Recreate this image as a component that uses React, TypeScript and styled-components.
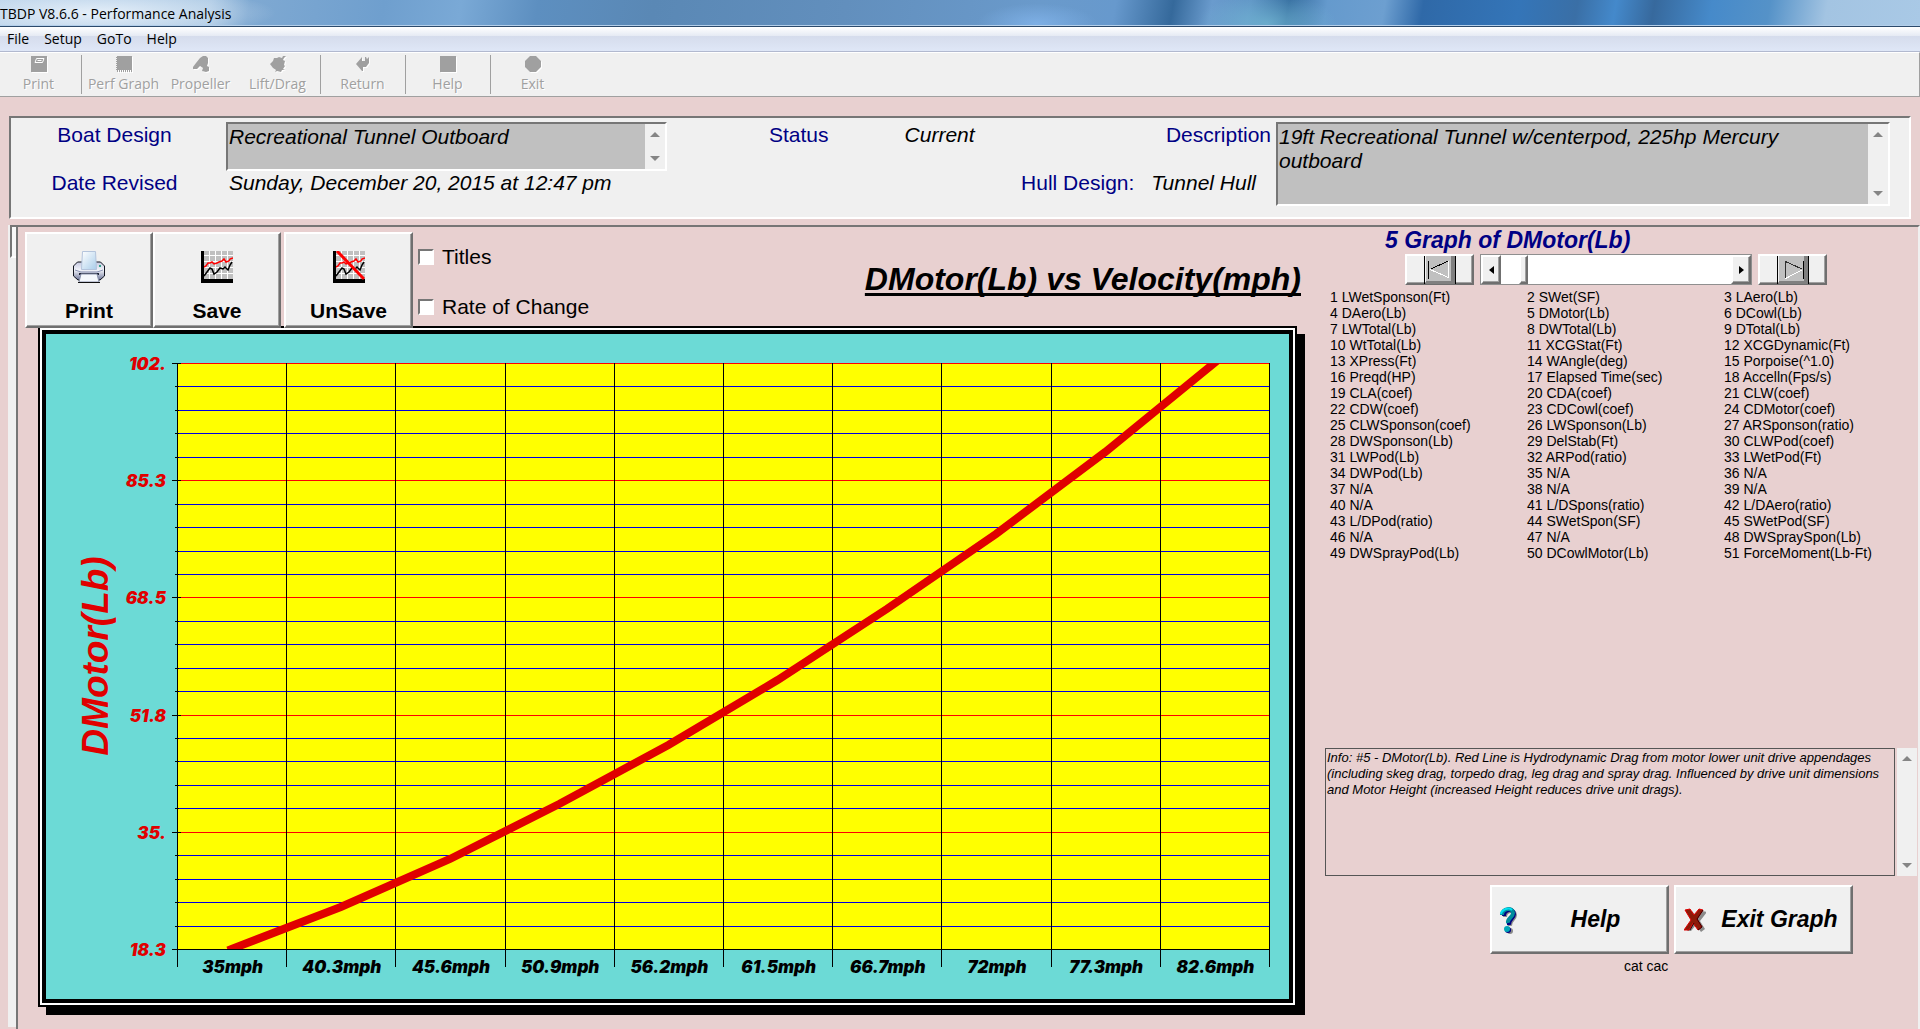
import React, { useState } from "react";
import styled, { createGlobalStyle, css } from "styled-components";

const PINK = "#e8d0d0";
const FACE = "#f0f0f0";
const NAVY = "#000084";
const UI = `"Open Sans", "Noto Sans", sans-serif`;
const ARIAL = `"Liberation Sans", Arial, sans-serif`;

const GlobalStyle = createGlobalStyle`
  *, *::before, *::after { box-sizing: border-box; }
  body { margin: 0; background: ${PINK}; font-family: ${ARIAL}; color: #000; }
  button, input, textarea { font: inherit; color: inherit; margin: 0; }
`;

const raised = css`
  border: 2px solid;
  border-color: #fff #6f6f6f #6f6f6f #fff;
  box-shadow: inset -1px -1px 0 #a0a0a0;
  background: ${FACE};
`;

const sunken = css`
  border: 2px solid;
  border-color: #767676 #fff #fff #767676;
`;

const Page = styled.div`
  display: flex;
  flex-direction: column;
  min-height: 100vh;
  overflow: hidden;
`;

const TitleBar = styled.header`
  height: 27px;
  border-bottom: 1px solid #2c4a6c;
  box-shadow: inset 0 -1px 0 #b4cfea;
  background:
    radial-gradient(ellipse 180px 26px at 5% 50%, rgba(235, 243, 251, 0.9), rgba(235, 243, 251, 0) 100%),
    radial-gradient(ellipse 70px 30px at 66% 90%, rgba(120, 190, 215, 0.7), transparent),
    radial-gradient(ellipse 60px 20px at 54% 90%, rgba(130, 180, 235, 0.8), transparent),
    linear-gradient(100deg, #b5cfe8 0%, #a9c7e3 11%, #7fa9d2 13%, #6f9fce 20%, #7aa9d6 24%, #5d8fc0 28%,
      #5a88b5 34%, #628fbd 44%, #6a9acb 54%, #6799cd 58%, #35699b 61%, #6a9bcd 63%, #5f93c5 65%,
      #336a9d 67%, #659acd 69%, #6d9fd0 72%, #2f69a8 74%, #3475b8 79%, #3a6fa6 82%, #4489cb 84%,
      #37699d 86%, #468aca 89%, #5592c8 92%, #a3c4e2 95%, #a9c9e6 100%);
`;

const WindowTitle = styled.h1`
  margin: 0;
  font: 400 14px/27px ${UI};
`;

const MenuBar = styled.nav`
  display: flex;
  gap: 15px;
  height: 25px;
  padding-left: 7px;
  border-bottom: 1px solid #b2b9cf;
  background: linear-gradient(#fff, #e6ebf4 36%, #d5dcec 37%, #dfe7f7);
`;

const MenuItem = styled.button`
  padding: 0;
  border: 0;
  background: none;
  font: 400 14px/24px ${UI};
`;

const ToolBar = styled.div`
  display: flex;
  height: 45px;
  border-top: 1px solid #fff;
  border-bottom: 1px solid #a0a0a0;
  border-right: 1px solid #a0a0a0;
  background: ${FACE};
`;

const ToolButton = styled.button`
  display: flex;
  flex-direction: column;
  align-items: center;
  gap: 2px;
  width: 77px;
  padding: 3px 0 0;
  border: 0;
  background: none;
  color: #a0a0a0;
  font: 400 14px/20px ${UI};
  white-space: nowrap;
  text-shadow: 1px 1px 0 #fff;

  svg { flex: none; filter: drop-shadow(1px 1px 0 #fff); }
`;

const ToolDivider = styled.span`
  width: 1px;
  height: 39px;
  margin: 2px 3px 2px 4px;
  background: #a0a0a0;
`;

const Summary = styled.section`
  ${sunken}
  display: grid;
  grid-template-columns: 215fr 441fr 609fr 614fr;
  height: 103px;
  margin: 19px 9px 6px;
  padding: 4px 19px 9px 0;
  background: ${FACE};
  font-size: 21px;
  line-height: 24px;
`;

const LabelColumn = styled.div`
  display: flex;
  flex-direction: column;
  align-items: center;
  gap: 22px;
  padding-right: 8px;
  line-height: 26px;
`;

const ValueColumn = styled.div`
  display: flex;
  flex-direction: column;
`;

const FactColumn = styled.div`
  display: flex;
  flex-direction: column;
  gap: 22px;
  line-height: 26px;
`;

const FactRow = styled.div<{ $end?: boolean }>`
  display: flex;
  gap: ${(p) => (p.$end ? 17 : 76)}px;
  padding: ${(p) => (p.$end ? "0 20px 0 0" : "0 5px 0 102px")};
  justify-content: ${(p) => (p.$end ? "flex-end" : "flex-start")};

  & > label { margin-left: auto; }
`;

const Caption = styled.span`
  color: ${NAVY};
`;

const FieldLabel = styled.label`
  color: ${NAVY};
`;

const Value = styled.span<{ $indent?: boolean }>`
  padding-left: ${(p) => (p.$indent ? 3 : 0)}px;
  font-style: italic;
  white-space: nowrap;
`;

const ScrollField = styled.div<{ $height: number }>`
  ${sunken}
  display: flex;
  height: ${(p) => p.$height}px;
`;

const FieldText = styled.textarea`
  flex: 1;
  min-width: 0;
  padding: 1px 8px 1px 1px;
  border: 0;
  outline: 0;
  resize: none;
  overflow: hidden;
  background: #c0c0c0;
  font-style: italic;
`;

const ScrollRail = styled.div`
  display: flex;
  flex-direction: column;
  justify-content: space-between;
  width: 20px;
  background: ${FACE};
`;

const ScrollStep = styled.button`
  display: grid;
  place-items: center;
  height: 21px;
  padding: 0;
  border: 0;
  background: none;
`;

const Workspace = styled.div`
  display: flex;
  flex: 1;
  padding-left: 8px;
`;

const PageTab = styled.div`
  width: 8px;
  margin-bottom: 2px;
  padding-left: 2px;
  background: ${FACE};

  &::before {
    content: "";
    display: block;
    height: 33px;
    border: 2px solid;
    border-right: 0;
    border-color: #767676 transparent #fff #767676;
    background: #f8f8f8;
  }
`;

const Frame = styled.main`
  display: flex;
  flex: 1;
  min-width: 0;
  border: 2px solid;
  border-color: #767676 ${FACE} transparent #767676;
  border-bottom: 0;
`;

const GraphSide = styled.section`
  flex: 1;
  min-width: 0;
  padding: 5px 0 12px 7px;
`;

const GraphHeader = styled.div`
  display: flex;
  position: relative;
  z-index: 1;
  height: 96px;
  padding-right: 4px;
`;

const GraphButton = styled.button<{ $apart?: boolean }>`
  ${raised}
  display: flex;
  flex-direction: column;
  align-items: center;
  justify-content: space-between;
  width: ${(p) => (p.$apart ? 129 : 128)}px;
  margin-left: ${(p) => (p.$apart ? 3 : 0)}px;
  padding: 17px 0 3px;
  font-size: 21px;
  font-weight: 700;
  line-height: 24px;
`;

const Options = styled.div`
  display: flex;
  flex-direction: column;
  gap: 26px;
  padding: 13px 0 0 5px;
`;

const Option = styled.label`
  display: flex;
  align-items: center;
  gap: 8px;
  font-size: 21px;
  line-height: 24px;
`;

const Tick = styled.input`
  ${sunken}
  appearance: none;
  width: 16px;
  height: 16px;
  background: #fff;

  &:checked { box-shadow: inset 0 0 0 3px #fff; background: #000; }
`;

const GraphTitle = styled.h2`
  margin: 28px 0 0 auto;
  font-size: 32px;
  font-style: italic;
  line-height: 38px;
  text-decoration: underline;
  text-decoration-thickness: 3px;
  text-underline-offset: 3px;
  text-decoration-skip-ink: none;
`;

const GraphFrame = styled.div`
  margin: -2px 8px 0 13px;
  padding: 2px;
  border: 2px solid #000;
  background: #fff;
  box-shadow: 8px 8px 0 #000;
`;

const Plot = styled.svg`
  display: block;
  width: 100%;
  height: auto;
  border: 4px solid #000;
  background: #6cdad6;
`;

const AxisText = styled.text<{ $red?: boolean }>`
  fill: ${(p) => (p.$red ? "#e00000" : "#000")};
  font: italic 900 17px Inter, "DejaVu Sans", sans-serif;
`;

const AxisTitle = styled.text`
  fill: #e00000;
  font: italic 700 37px ${ARIAL};
`;

const Sidebar = styled.aside`
  flex: none;
  width: 593px;
  margin-left: 20px;
`;

const SidebarTitle = styled.h2`
  margin: 0;
  padding-left: 60px;
  color: ${NAVY};
  font-size: 23px;
  font-style: italic;
  line-height: 27px;
`;

const Pager = styled.div`
  display: flex;
  gap: 6px;
  height: 31px;
  padding-left: 80px;
`;

const PageButton = styled.button`
  ${raised}
  display: grid;
  place-items: center;
  width: 69px;
  padding: 0;
`;

const SliderBox = styled.div`
  display: flex;
  width: 272px;
  border: 1px solid #8f8f8f;
`;

const StepButton = styled.button`
  ${raised}
  display: grid;
  place-items: center;
  width: 20px;
  padding: 0;
`;

const Slider = styled.input`
  appearance: none;
  flex: 1;
  min-width: 0;
  background: #fff;

  &::-webkit-slider-thumb {
    ${raised}
    appearance: none;
    width: 9px;
    height: 29px;
  }
`;

const SeriesList = styled.ul`
  display: grid;
  grid-template-columns: repeat(3, 197px);
  margin: 4px 0 0;
  padding: 0 0 0 5px;
  list-style: none;
  font-size: 14px;
  line-height: 16px;
`;

const InfoRow = styled.div`
  display: flex;
  gap: 2px;
  height: 128px;
  margin-top: 187px;
`;

const InfoText = styled.textarea`
  width: 570px;
  padding: 1px;
  border: 1px solid #555;
  outline: 0;
  resize: none;
  overflow: hidden;
  background: transparent;
  font-size: 13px;
  font-style: italic;
  line-height: 16px;
`;

const Actions = styled.div`
  display: flex;
  gap: 5px;
  padding: 9px 0 0 165px;
`;

const ActionButton = styled.button`
  ${raised}
  display: grid;
  grid-template-columns: 32px 1fr;
  align-items: center;
  width: 179px;
  height: 69px;
  padding: 0 8px;
  font-size: 23px;
  font-style: italic;
  font-weight: 700;
  white-space: nowrap;
`;

const Footnote = styled.p`
  margin: 4px 0 0;
  padding-left: 299px;
  font-size: 14px;
  line-height: 16px;
`;

const Arrow = ({ up }: { up?: boolean }) => (
  <svg width="10" height="5" viewBox="0 0 10 5">
    <path d={up ? "M0 5 5 0l5 5z" : "M0 0 5 5l5-5z"} fill="#858585" />
  </svg>
);

const Rail = () => (
  <ScrollRail>
    <ScrollStep aria-label="Scroll up"><Arrow up /></ScrollStep>
    <ScrollStep aria-label="Scroll down"><Arrow /></ScrollStep>
  </ScrollRail>
);

const toolShapes: Record<string, React.ReactNode> = {
  Print: <><path d="M0 0h16v16H0z" fill="#a0a0a0" /><path d="M5.5 2.500h7.500l-1.500 4H4zM6.500 4.500h4" fill="none" stroke="#fff" /></>,
  "Perf Graph": <><path d="M1 0h15v14H1z" fill="#a0a0a0" /><path d="M.5 1v14M1 15h15" stroke="#a0a0a0" strokeDasharray="1 1" fill="none" strokeWidth="2" /></>,
  Propeller: <path d="M7 2l3-2h3l2 2v5l-1 3 2 1v4l-3 1-4-1 1-3-3-2-3 3H0v-2l3-4z" fill="#a0a0a0" />,
  "Lift/Drag": <path d="M0 8l3-3 1-3 3 0 2-1 3 1 1-2 3 0-2 2-1 2 2 1-1 4 1 1-2 3 2 1-3 0-1 2-4-1-2 1 1-2-3-2z" fill="#a0a0a0" />,
  Return: <path d="M1 8l6-7v4h3V1h1l1 2 2-2v6l-3 4H8v4H7z" fill="#a0a0a0" />,
  Help: <path d="M0 0h16v16H0z" fill="#a0a0a0" />,
  Exit: <path d="M5 0h6l5 5v6l-5 5H5l-5-5V5z" fill="#a0a0a0" />,
};

const Tool = ({ name }: { name: string }) => (
  <ToolButton disabled>
    <svg width="16" height="16" viewBox="0 0 16 16">{toolShapes[name]}</svg>
    {name}
  </ToolButton>
);

const PrinterIcon = () => (
  <svg width="32" height="32" viewBox="0 0 32 32">
    <defs>
      <linearGradient id="printer-body" x1="0" y1="0" x2="0" y2="1">
        <stop offset="0" stopColor="#c4c8e0" />
        <stop offset=".45" stopColor="#f2f4fa" />
        <stop offset="1" stopColor="#6c7498" />
      </linearGradient>
      <linearGradient id="printer-sheet" x1="0" y1="0" x2="1" y2="1">
        <stop offset="0" stopColor="#fff" />
        <stop offset="1" stopColor="#a9cdea" />
      </linearGradient>
    </defs>
    <path d="M9 11H4.500L.500 15v10l4.500 4h22l4.500-4v-10l-4-4h-5z" fill="url(#printer-body)" stroke="#10141f" />
    <path d="M9.500.500h13l1 18h-15z" fill="url(#printer-sheet)" stroke="#b4c4dc" />
    <path d="M2 19l6 2h16l6-2" fill="none" stroke="#8c94b4" />
    <path d="M6 22h20v2H6z" fill="#20263a" />
    <path d="M8 23h16l2 8H6z" fill="#f5f8fd" stroke="#8b93ad" />
    <path d="M5 31.500h22" stroke="#111" />
    <path d="M26 14h2v2h-2z" fill="#35a58c" />
  </svg>
);

const ChartIcon = ({ crossed }: { crossed?: boolean }) => (
  <svg width="32" height="32" viewBox="0 0 32 32">
    <path d="M0 0h32v32H0z" fill="#c0c0c0" />
    <path d="M8.500 0v28M14.500 0v28M20.500 0v28M26.500 0v28M3 4.500h29M3 10.500h29M3 16.500h29M3 22.500h29" stroke="#fff" shapeRendering="crispEdges" />
    <path d="M3 16l2-1 2-3 2 0 2-1 2 2 3-1 2-1 3-1 2-2 2 3 3-1 1-2 3-1" fill="none" stroke="#f00" strokeWidth="1.500" />
    <path d="M3 25l3-4 3-4 2 1 2 5 3-2 3-4 3 1 2-2 3 3 2-5 2-3" fill="none" stroke="#000" strokeWidth="1.500" />
    <path d="M0 0h3v28h29v4H0z" fill="#000" />
    {crossed && <path d="M4 0l27 28" stroke="#f00" strokeWidth="3" />}
  </svg>
);

const FirstLastIcon = ({ last }: { last?: boolean }) => (
  <svg width="32" height="28" viewBox="0 0 32 28">
    <path d="M.500 0v28M31.500 0v28" stroke="#000" />
    <path d="M2 0h29v28H2z" fill="#808080" />
    <path d="M2 0h25v25H2z" fill="#c0c0c0" />
    {last ? (
      <g fill="none" shapeRendering="crispEdges">
        <path d="M8.500 22.500V5.500L25 13" stroke="#303030" />
        <path d="M8.500 22.500 25 14" stroke="#fff" />
        <path d="M26.500 5v18" stroke="#000" />
      </g>
    ) : (
      <g fill="none" shapeRendering="crispEdges">
        <path d="M4.500 5v18" stroke="#000" />
        <path d="M6 13.500 24 5" stroke="#000" />
        <path d="M6 13.500 24.500 21.500V5" stroke="#fff" />
      </g>
    )}
  </svg>
);

const HelpIcon = () => (
  <svg width="18" height="28" viewBox="0 0 18 28">
    <g fill="none" strokeWidth="4">
      <path d="M3 9c0-7 10-8 10-2 0 5-6 5-5 11" stroke="#8a8a8a" transform="translate(2 2)" />
      <path d="M3 9c0-7 10-8 10-2 0 5-6 5-5 11" stroke="#000080" transform="translate(1 1)" />
      <path d="M2 9c0-7 11-8 11-2 0 5-6 5-5 10" stroke="#008c9c" />
      <path d="M1 8c1-5 8-7 11-4" stroke="#00e0f0" strokeWidth="2" />
    </g>
    <circle cx="10" cy="25" r="3" fill="#8a8a8a" />
    <circle cx="8" cy="24" r="3" fill="#000080" />
    <circle cx="7" cy="23" r="3" fill="#00a8b8" />
  </svg>
);

const ExitIcon = () => (
  <svg width="22" height="24" viewBox="0 0 22 24">
    <path d="M3 3l4-1 5 6 5-6 5 1-7 9 5 8-4 3-5-7-5 6-4 0 7-10z" fill="#8a8a8a" transform="translate(1 1)" />
    <path d="M1 2l5-1 4 6 5-6 4 1-6 9 5 8-4 3-5-7-4 7-5 0 7-10z" fill="#8c1a08" stroke="#e00000" />
    <path d="M19 2l-6 9 5 8-4 3M10 15l-4 7" fill="none" stroke="#300" />
  </svg>
);

const left = 131;
const right = 1223;
const top = 29;
const bottom = 615;
const rows = 25;
const yLabels = ["102.", "85.3", "68.5", "51.8", "35.", "18.3"];
const xLabels = ["35mph", "40.3mph", "45.6mph", "50.9mph", "56.2mph", "61.5mph", "66.7mph", "72mph", "77.3mph", "82.6mph"];
const motorDrag = [615, 573, 525, 470, 411, 346, 275, 200, 118, 29];
const columnWidth = (right - left) / xLabels.length;
const rowY = (i: number) => Math.round(top + ((bottom - top) * i) / rows) + 0.5;
const columnX = (i: number) => Math.round(left + columnWidth * i) + 0.5;

const DragPlot = () => (
  <Plot viewBox="0 0 1243 665" role="img" aria-label="DMotor(Lb) vs Velocity(mph)">
    <defs>
      <clipPath id="plot-area">
        <rect x={left} y={top} width={right - left} height={bottom - top} />
      </clipPath>
    </defs>
    <rect x={left} y={top} width={right - left} height={bottom - top} fill="#ff0" />
    <g shapeRendering="crispEdges">
      {Array.from({ length: rows + 1 }, (_, i) => {
        const major = i % 5 === 0;
        return (
          <g key={i}>
            <path d={`M${left} ${rowY(i)}H${right}`} stroke={i === rows ? "#000" : major ? "#f00" : "#0000e0"} />
            <path d={`M${left - (major ? 5 : 2)} ${rowY(i)}h${major ? 9 : 4}`} stroke="#000" />
          </g>
        );
      })}
      {Array.from({ length: xLabels.length + 1 }, (_, i) => (
        <path key={i} d={`M${columnX(i)} ${top}V${bottom + 18}`} stroke="#000" />
      ))}
    </g>
    <polyline
      clipPath="url(#plot-area)"
      points={motorDrag.map((y, i) => `${left + columnWidth * (i + 0.5)},${y}`).join(" ")}
      fill="none"
      stroke="#e00000"
      strokeWidth="8"
      strokeLinecap="square"
    />
    {yLabels.map((label, i) => (
      <AxisText key={label} $red x={120} y={rowY(i * 5) + 6} textAnchor="end">{label}</AxisText>
    ))}
    {xLabels.map((label, i) => (
      <AxisText key={label} x={left + columnWidth * (i + 0.5) + 1} y={639} textAnchor="middle">{label}</AxisText>
    ))}
    <AxisTitle transform="translate(62 322) rotate(-90)" textAnchor="middle">DMotor(Lb)</AxisTitle>
  </Plot>
);

const series = [
  "LWetSponson(Ft)", "SWet(SF)", "LAero(Lb)", "DAero(Lb)", "DMotor(Lb)", "DCowl(Lb)",
  "LWTotal(Lb)", "DWTotal(Lb)", "DTotal(Lb)", "WtTotal(Lb)", "XCGStat(Ft)", "XCGDynamic(Ft)",
  "XPress(Ft)", "WAngle(deg)", "Porpoise(^1.0)", "Preqd(HP)", "Elapsed Time(sec)", "Accelln(Fps/s)",
  "CLA(coef)", "CDA(coef)", "CLW(coef)", "CDW(coef)", "CDCowl(coef)", "CDMotor(coef)",
  "CLWSponson(coef)", "LWSponson(Lb)", "ARSponson(ratio)", "DWSponson(Lb)", "DelStab(Ft)", "CLWPod(coef)",
  "LWPod(Lb)", "ARPod(ratio)", "LWetPod(Ft)", "DWPod(Lb)", "N/A", "N/A", "N/A", "N/A", "N/A", "N/A",
  "L/DSpons(ratio)", "L/DAero(ratio)", "L/DPod(ratio)", "SWetSpon(SF)", "SWetPod(SF)", "N/A", "N/A",
  "DWSpraySpon(Lb)", "DWSprayPod(Lb)", "DCowlMotor(Lb)", "ForceMoment(Lb-Ft)",
];

const info =
  "Info: #5 - DMotor(Lb). Red Line is Hydrodynamic Drag from motor lower unit drive appendages (including skeg drag, torpedo drag, leg drag and spray drag. Influenced by drive unit dimensions and Motor Height (increased Height reduces drive unit drags).";

export default function App() {
  const [graph, setGraph] = useState(5);
  const step = (by: number) => setGraph((g) => Math.min(51, Math.max(1, g + by)));

  return (
    <Page>
      <GlobalStyle />
      <TitleBar><WindowTitle>TBDP V8.6.6 - Performance Analysis</WindowTitle></TitleBar>
      <MenuBar>
        {["File", "Setup", "GoTo", "Help"].map((m) => <MenuItem key={m}>{m}</MenuItem>)}
      </MenuBar>
      <ToolBar>
        <Tool name="Print" />
        <ToolDivider />
        <Tool name="Perf Graph" />
        <Tool name="Propeller" />
        <Tool name="Lift/Drag" />
        <ToolDivider />
        <Tool name="Return" />
        <ToolDivider />
        <Tool name="Help" />
        <ToolDivider />
        <Tool name="Exit" />
      </ToolBar>

      <Summary>
        <LabelColumn>
          <FieldLabel htmlFor="boat">Boat Design</FieldLabel>
          <Caption>Date Revised</Caption>
        </LabelColumn>
        <ValueColumn>
          <ScrollField $height={49}>
            <FieldText id="boat" defaultValue="Recreational Tunnel Outboard" />
            <Rail />
          </ScrollField>
          <Value $indent>Sunday, December 20, 2015 at 12:47 pm</Value>
        </ValueColumn>
        <FactColumn>
          <FactRow>
            <Caption>Status</Caption>
            <Value>Current</Value>
            <FieldLabel htmlFor="description">Description</FieldLabel>
          </FactRow>
          <FactRow $end>
            <Caption>Hull Design:</Caption>
            <Value>Tunnel Hull</Value>
          </FactRow>
        </FactColumn>
        <ScrollField $height={84}>
          <FieldText id="description" defaultValue="19ft Recreational Tunnel w/centerpod, 225hp Mercury outboard" />
          <Rail />
        </ScrollField>
      </Summary>

      <Workspace>
        <PageTab />
        <Frame>
          <GraphSide>
            <GraphHeader>
              <GraphButton><PrinterIcon />Print</GraphButton>
              <GraphButton><ChartIcon />Save</GraphButton>
              <GraphButton $apart><ChartIcon crossed />UnSave</GraphButton>
              <Options>
                <Option><Tick type="checkbox" />Titles</Option>
                <Option><Tick type="checkbox" />Rate of Change</Option>
              </Options>
              <GraphTitle>DMotor(Lb) vs Velocity(mph)</GraphTitle>
            </GraphHeader>
            <GraphFrame><DragPlot /></GraphFrame>
          </GraphSide>

          <Sidebar>
            <SidebarTitle>{graph} Graph of {series[graph - 1]}</SidebarTitle>
            <Pager>
              <PageButton aria-label="First graph" onClick={() => setGraph(1)}><FirstLastIcon /></PageButton>
              <SliderBox>
                <StepButton aria-label="Previous graph" onClick={() => step(-1)}>
                  <svg width="5" height="8" viewBox="0 0 5 8"><path d="M5 0v8L0 4z" /></svg>
                </StepButton>
                <Slider type="range" aria-label="Graph number" min={1} max={51} value={graph}
                  onChange={(e) => setGraph(Number(e.target.value))} />
                <StepButton aria-label="Next graph" onClick={() => step(1)}>
                  <svg width="5" height="8" viewBox="0 0 5 8"><path d="M0 0v8l5-4z" /></svg>
                </StepButton>
              </SliderBox>
              <PageButton aria-label="Last graph" onClick={() => setGraph(51)}><FirstLastIcon last /></PageButton>
            </Pager>
            <SeriesList>
              {series.map((name, i) => <li key={i}>{i + 1} {name}</li>)}
            </SeriesList>
            <InfoRow>
              <InfoText aria-label="Graph information" readOnly value={info} />
              <Rail />
            </InfoRow>
            <Actions>
              <ActionButton><HelpIcon />Help</ActionButton>
              <ActionButton><ExitIcon />Exit Graph</ActionButton>
            </Actions>
            <Footnote>cat cac</Footnote>
          </Sidebar>
        </Frame>
      </Workspace>
    </Page>
  );
}
